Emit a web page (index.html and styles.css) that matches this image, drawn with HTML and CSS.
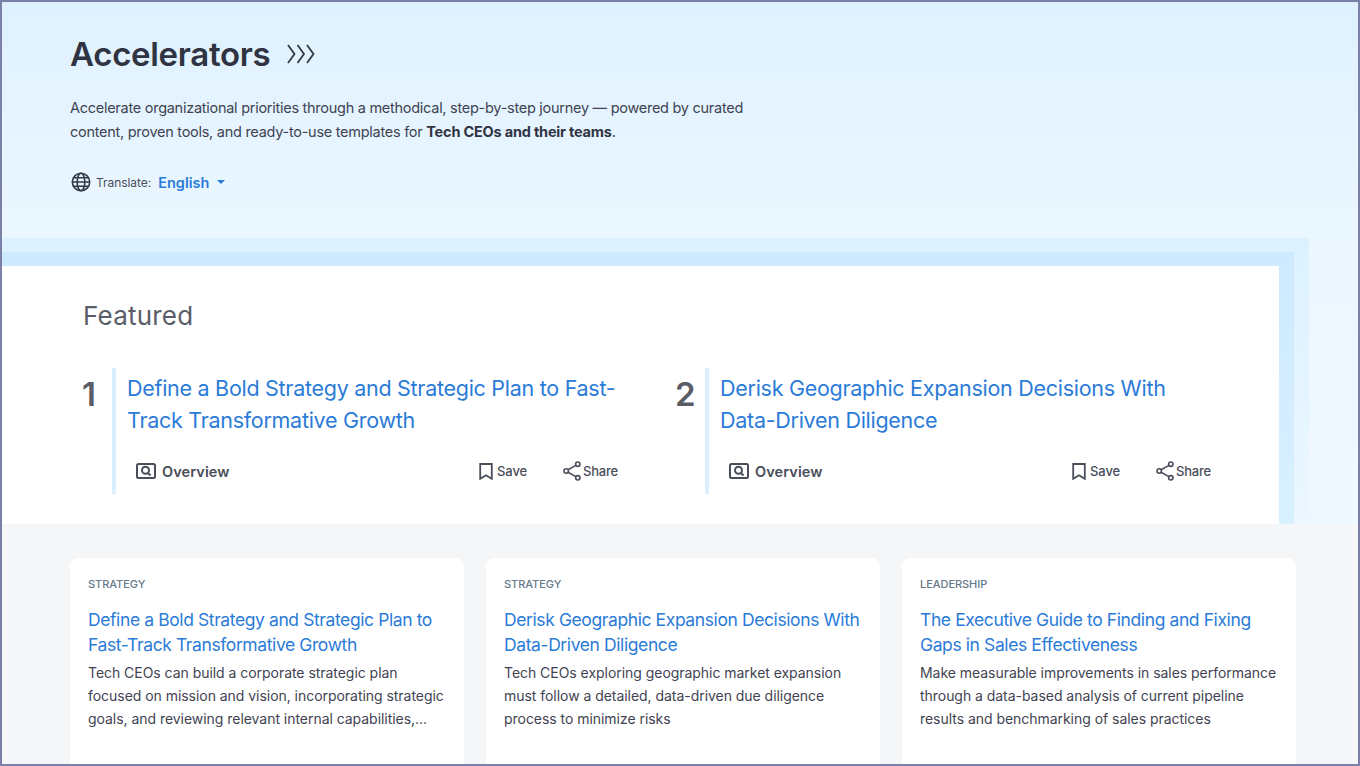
FILE: index.html
```html
<!DOCTYPE html>
<html lang="en">
<head>
    <meta charset="UTF-8">
    <title>Accelerators</title>
    <link rel="stylesheet" href="styles.css">
</head>
<body>
    <div class="page">
        <div class="hero">
            <div class="hero-title">
                <h1>Accelerators</h1>
                <svg class="chevrons" width="28" height="22" viewBox="0 0 28 22" fill="none" stroke="#333847" stroke-width="1.8"><path d="M1 2l6.500 9L1 20M10.500 2l6.500 9-6.500 9M20 2l6.500 9L20 20"/></svg>
            </div>
            <p class="hero-text">Accelerate organizational priorities through a methodical, step-by-step journey — powered by curated content, proven tools, and ready-to-use templates for <b>Tech CEOs and their teams</b>.</p>
            <div class="translate">
                <svg width="20" height="20" viewBox="0 0 20 20" fill="none" stroke="#333847" stroke-width="1.6"><circle cx="10" cy="10" r="8.700"/><ellipse cx="10" cy="10" rx="3.800" ry="8.700"/><path d="M1.300 10h17.400M2.500 5.800h15M2.500 14.200h15"/></svg>
                <span class="translate-label">Translate:</span>
                <span class="translate-lang">English</span>
                <span class="caret"></span>
            </div>
        </div>

        <div class="band-outer">
            <div class="band-inner">
                <div class="featured">
                    <h2>Featured</h2>
                    <div class="featured-list">
                        <div class="feature">
                            <div class="feature-num">1</div>
                            <div class="feature-body">
                                <a class="feature-title">Define a Bold Strategy and Strategic Plan to Fast-Track Transformative Growth</a>
                                <div class="feature-actions">
                                    <span class="action-overview">
                                        <svg width="20" height="16" viewBox="0 0 20 16" fill="none" stroke="#4a4d5a" stroke-width="2"><rect x="1" y="1" width="18" height="14" rx="1.500"/><circle cx="9.500" cy="7.300" r="3.500"/><path d="M12 10l2.500 2.500"/></svg>
                                        Overview
                                    </span>
                                    <span class="action-save">
                                        <svg width="14" height="17" viewBox="0 0 14 17" fill="none" stroke="#4a4d5a" stroke-width="1.800"><path d="M1.200 1h11.600v14.800L7 12.300l-5.800 3.500z"/></svg>
                                        Save
                                    </span>
                                    <span class="action-share">
                                        <svg width="18" height="20" viewBox="0 0 18 20" fill="none" stroke="#4a4d5a" stroke-width="1.600"><circle cx="14.800" cy="3.200" r="2.200"/><circle cx="3.200" cy="10" r="2.200"/><circle cx="14.800" cy="16.800" r="2.200"/><path d="M13 4.400L5 8.800M5 11.200l8 4.400"/></svg>
                                        Share
                                    </span>
                                </div>
                            </div>
                        </div>
                        <div class="feature">
                            <div class="feature-num">2</div>
                            <div class="feature-body">
                                <a class="feature-title">Derisk Geographic Expansion Decisions With Data-Driven Diligence</a>
                                <div class="feature-actions">
                                    <span class="action-overview">
                                        <svg width="20" height="16" viewBox="0 0 20 16" fill="none" stroke="#4a4d5a" stroke-width="2"><rect x="1" y="1" width="18" height="14" rx="1.500"/><circle cx="9.500" cy="7.300" r="3.500"/><path d="M12 10l2.500 2.500"/></svg>
                                        Overview
                                    </span>
                                    <span class="action-save">
                                        <svg width="14" height="17" viewBox="0 0 14 17" fill="none" stroke="#4a4d5a" stroke-width="1.800"><path d="M1.200 1h11.600v14.800L7 12.300l-5.800 3.500z"/></svg>
                                        Save
                                    </span>
                                    <span class="action-share">
                                        <svg width="18" height="20" viewBox="0 0 18 20" fill="none" stroke="#4a4d5a" stroke-width="1.600"><circle cx="14.800" cy="3.200" r="2.200"/><circle cx="3.200" cy="10" r="2.200"/><circle cx="14.800" cy="16.800" r="2.200"/><path d="M13 4.400L5 8.800M5 11.200l8 4.400"/></svg>
                                        Share
                                    </span>
                                </div>
                            </div>
                        </div>
                    </div>
                </div>
            </div>
        </div>

        <div class="cards">
            <div class="card">
                <div class="card-tag">STRATEGY</div>
                <a class="card-title">Define a Bold Strategy and Strategic Plan to Fast-Track Transformative Growth</a>
                <p>Tech CEOs can build a corporate strategic plan focused on mission and vision, incorporating strategic goals, and reviewing relevant internal capabilities,...</p>
            </div>
            <div class="card">
                <div class="card-tag">STRATEGY</div>
                <a class="card-title">Derisk Geographic Expansion Decisions With Data-Driven Diligence</a>
                <p>Tech CEOs exploring geographic market expansion must follow a detailed, data-driven due diligence process to minimize risks</p>
            </div>
            <div class="card">
                <div class="card-tag">LEADERSHIP</div>
                <a class="card-title">The Executive Guide to Finding and Fixing Gaps in Sales Effectiveness</a>
                <p>Make measurable improvements in sales performance through a data-based analysis of current pipeline results and benchmarking of sales practices</p>
            </div>
        </div>
    </div>
</body>
</html>
```

FILE: styles.css
```css
html, body { margin: 0; height: 100%; overflow: hidden; }
body { font-family: Inter, 'Liberation Sans', sans-serif; color: #333847; background: #f5f6f8; }
.page { box-sizing: border-box; height: 766px; border: 2px solid #7b80a8; background: linear-gradient(180deg, #dff1ff 0, #ebf7ff 236px, #f0f8ff 520px); overflow: hidden; }

.hero { padding: 30px 68px 0; height: 236px; box-sizing: border-box; }
.hero-title { display: flex; align-items: center; gap: 17px; height: 44px; }
.hero-title h1 { margin: 0; font-size: 33px; font-weight: 600; line-height: 44px; letter-spacing: -0.3px; color: #2f3342; }
.hero-text { margin: 20px 0 0; width: 690px; font-size: 14.500px; line-height: 23.500px; letter-spacing: -0.27px; color: #3f4352; }
.hero-text b { font-weight: 700; letter-spacing: -0.2px; color: #2f3342; }
.translate { display: flex; align-items: center; margin-top: 27px; height: 24px; }
.translate svg { margin-left: 1px; }
.translate-label { margin-left: 5px; font-size: 12px; letter-spacing: -0.05px; color: #4a4d5a; }
.translate-lang { margin-left: 7px; font-size: 14.500px; font-weight: 600; color: #2b7bd8; }
.caret { margin-left: 8px; border: 4px solid transparent; border-top-color: #2b7bd8; border-bottom: 0; }

.band-outer { width: 1307px; padding: 14px 15px 0 0; box-sizing: border-box; background: linear-gradient(180deg, #dcf1ff, #ecf7ff); }
.band-inner { padding: 14px 15px 0 0; background: linear-gradient(180deg, #cdeaff, #d9f0ff); }
.featured { height: 258px; box-sizing: border-box; padding: 32px 0 0 80px; background: #fff; }
.featured h2 { margin: 0 0 0 1px; font-size: 26px; font-weight: 400; line-height: 36px; letter-spacing: 0.2px; color: #5a5d68; }
.featured-list { display: flex; margin-top: 34px; }
.feature { display: flex; width: 593px; }
.feature-num { width: 30px; padding-top: 6px; font-size: 33px; font-weight: 600; line-height: 40px; color: #5a5d68; }
.feature-body { width: 504px; height: 126px; border-left: 4px solid #d9efff; padding-left: 11px; }
.feature-title { display: block; font-size: 21.500px; line-height: 31.500px; padding-top: 5px; letter-spacing: -0.28px; color: #2b7bd8; }
.feature-actions { display: flex; align-items: center; margin-top: 25px; padding-left: 9px; font-size: 13px; font-weight: 500; letter-spacing: -0.1px; color: #4a4d5a; }
.feature-actions span { display: flex; align-items: center; }
.action-overview { gap: 6px; font-size: 14.500px; font-weight: 600; letter-spacing: 0.1px; width: 343px; }
.action-save { gap: 4px; width: 84px; }
.action-share { gap: 2px; letter-spacing: -0.2px; }

.cards { display: grid; grid-template-columns: repeat(3, 394px); gap: 22px; padding: 34px 0 0 68px; height: 240px; background: #f5f6f8; }
.card { background: #fff; border-radius: 8px; padding: 18px 18px 0; height: 230px; box-sizing: border-box; }
.card-tag { font-size: 11px; font-weight: 500; line-height: 16px; letter-spacing: -0.05px; color: #66788a; }
.card-title { display: block; margin-top: 15px; font-size: 17.500px; line-height: 25px; letter-spacing: -0.4px; color: #2b7bd8; }
.card p { margin: 4px 0 0; font-size: 14px; line-height: 23px; letter-spacing: -0.04px; color: #3f4352; }
```
